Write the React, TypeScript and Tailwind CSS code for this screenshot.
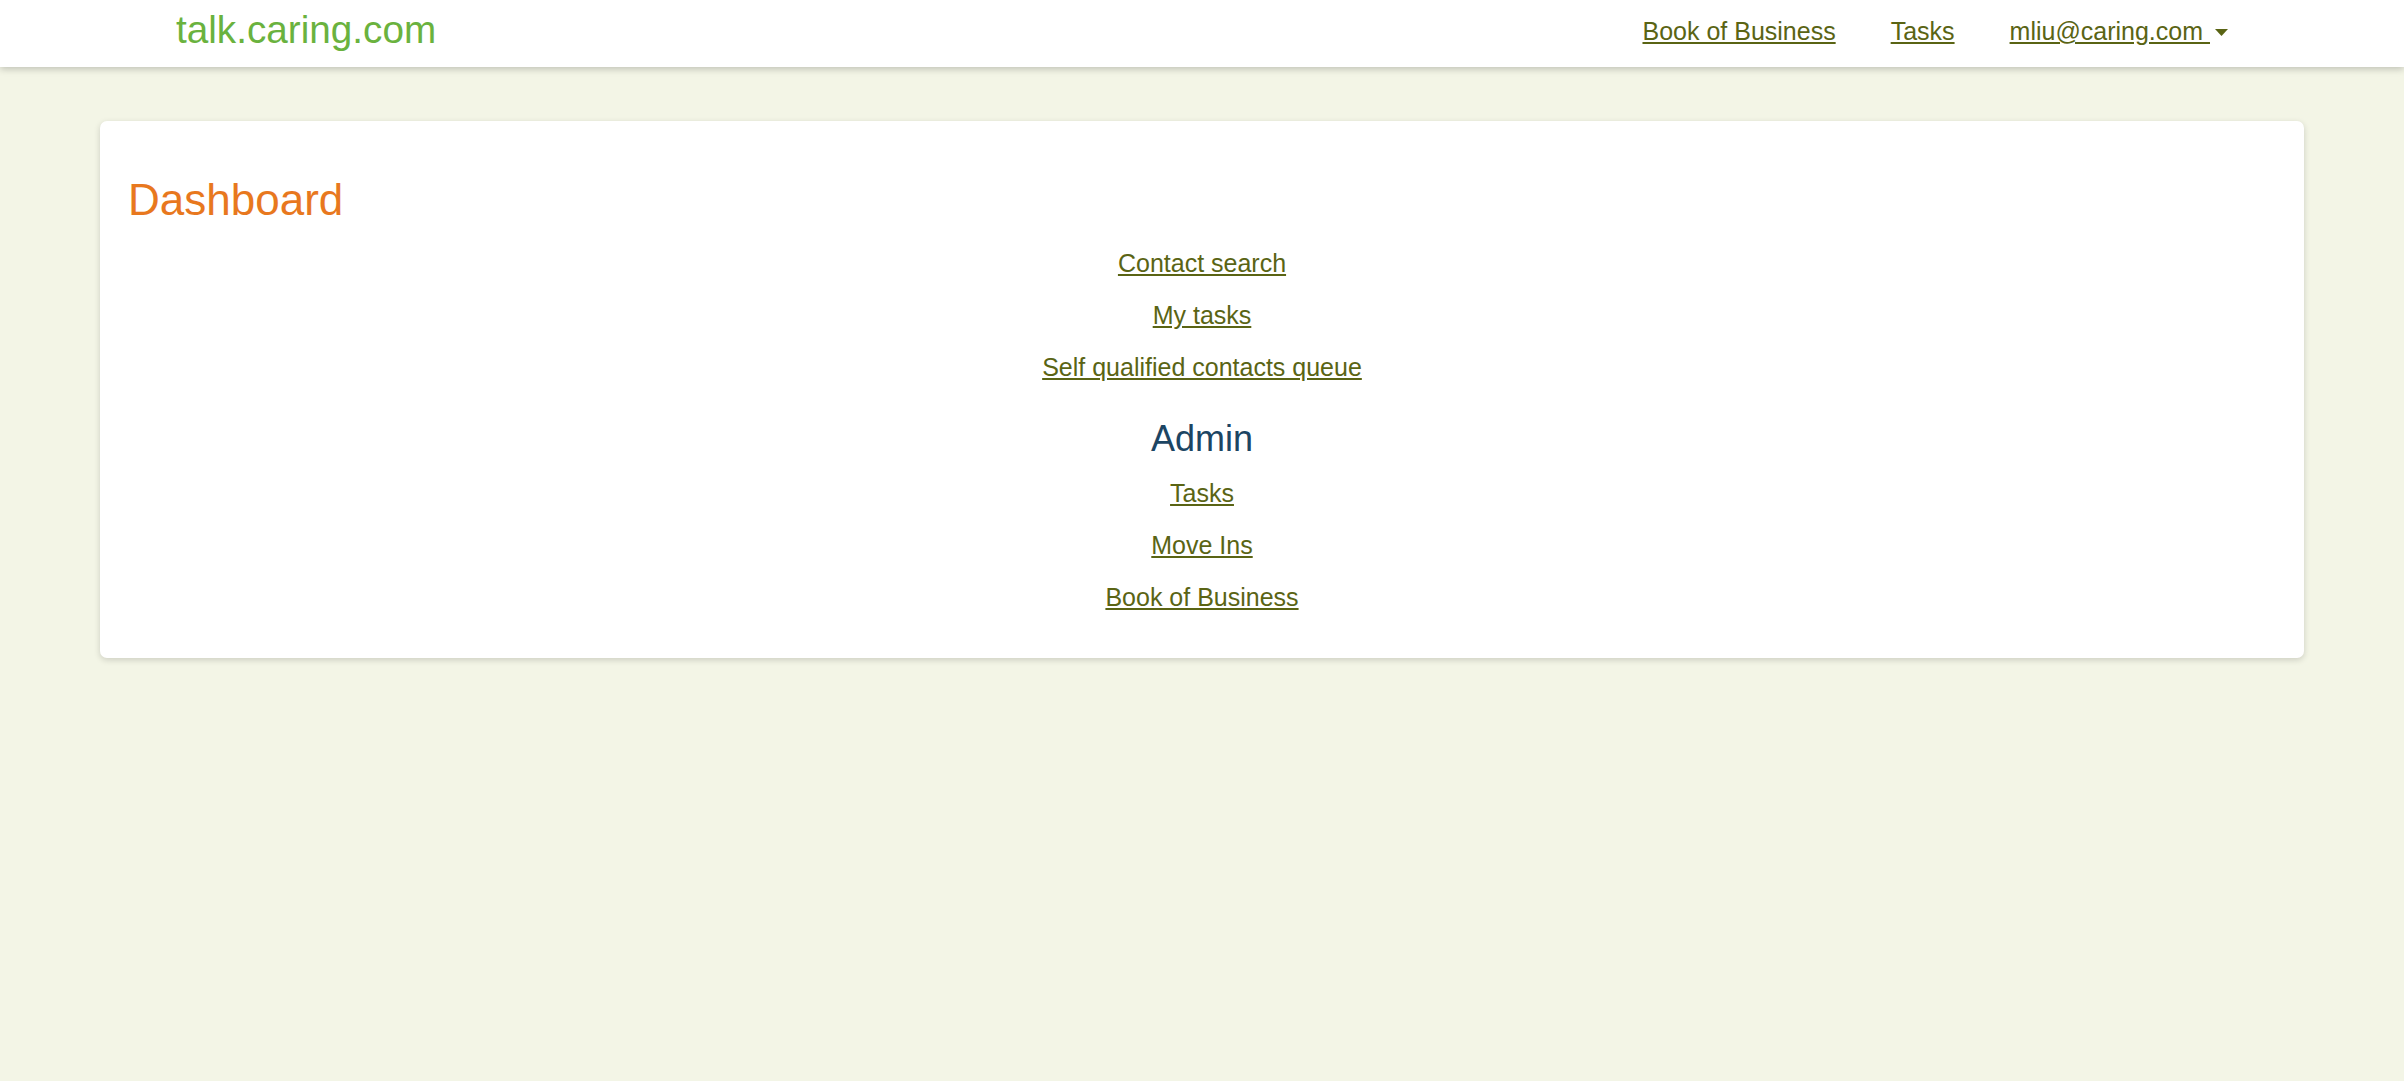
const LINKS = ["Contact search", "My tasks", "Self qualified contacts queue"];
const ADMIN_LINKS = ["Tasks", "Move Ins", "Book of Business"];

function NavLink({ label }: { label: string }) {
  return (
    <a href="#" className="text-[25px] leading-[30px] text-[#5a6414] underline">
      {label}
    </a>
  );
}

export default function App() {
  return (
    <div className="min-h-[1081px] bg-[#f3f5e6] font-['Liberation_Sans',Arial,sans-serif]">
      {/* top bar */}
      <header className="relative z-10 h-[67px] bg-white shadow-[0_2px_7px_rgba(0,0,0,0.22)]">
        <div className="flex items-start justify-between px-[176px]">
          <a href="#" className="pt-[8px] text-[38.7px] leading-[44px] text-[#6ab23e]">
            talk.caring.com
          </a>
          <nav className="flex items-start gap-[55px] pt-[16px]">
            <NavLink label="Book of Business" />
            <NavLink label="Tasks" />
            <a href="#" className="flex items-start text-[25px] leading-[30px] text-[#5a6414]">
              <span className="underline">mliu@caring.com&nbsp;</span>
              <svg width="13" height="7" viewBox="0 0 13 7" className="ml-[5px] mt-[13px]">
                <path d="M0 0h13L6.5 7z" fill="#5a6414" />
              </svg>
            </a>
          </nav>
        </div>
      </header>

      {/* dashboard card */}
      <main className="px-[100px] pt-[54px]">
        <div className="rounded-[7px] bg-white px-[28px] pt-[56px] pb-[35px] shadow-[0_2px_6px_rgba(0,0,0,0.16)]">
          <h1 className="text-[44px] leading-[46px] text-[#e8781e]">Dashboard</h1>

          <div className="mt-[14px] flex flex-col items-center text-center">
            {LINKS.map((label) => (
              <a
                key={label}
                href="#"
                className="text-[25px] leading-[52px] text-[#5a6414] underline"
              >
                {label}
              </a>
            ))}

            <h2 className="mt-[26px] mb-[8px] text-[36px] leading-[40px] text-[#1c4563]">Admin</h2>

            {ADMIN_LINKS.map((label) => (
              <a
                key={label}
                href="#"
                className="text-[25px] leading-[52px] text-[#5a6414] underline"
              >
                {label}
              </a>
            ))}
          </div>
        </div>
      </main>
    </div>
  );
}
